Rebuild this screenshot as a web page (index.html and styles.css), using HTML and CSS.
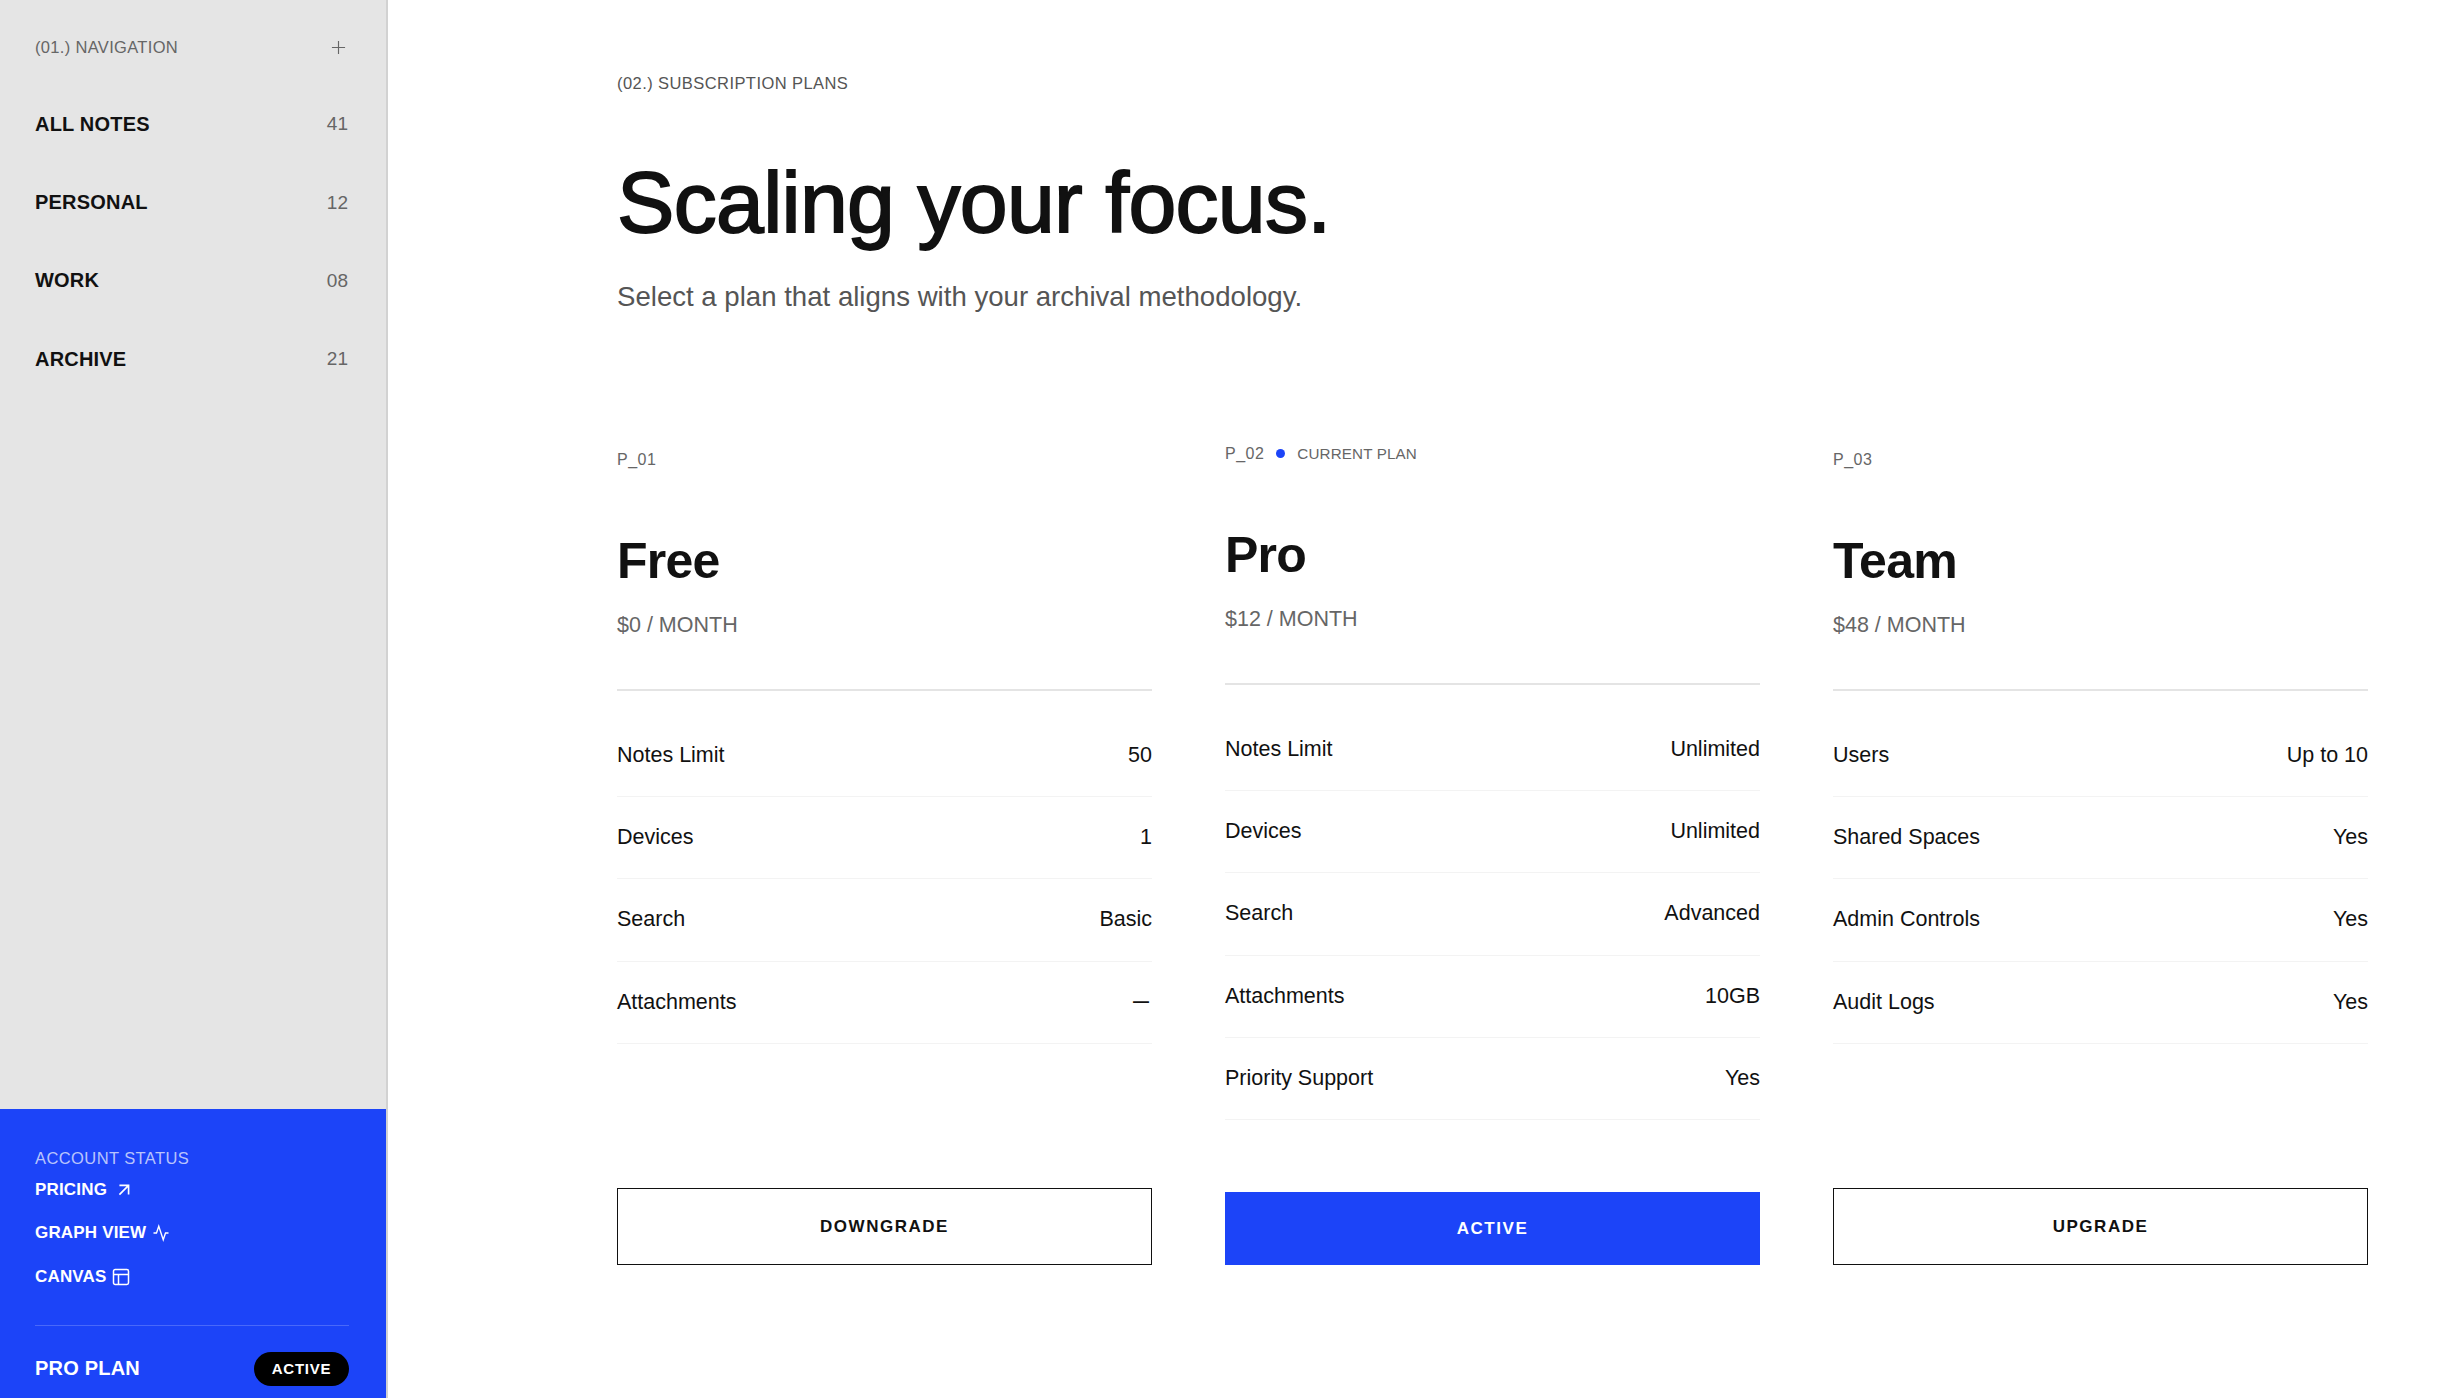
FILE: index.html
```html
<!DOCTYPE html>
<html lang="en">
<head>
    <meta charset="UTF-8">
    <meta name="viewport" content="width=device-width, initial-scale=1.0">
    <title>Subscription Plans</title>
    <link rel="stylesheet" href="styles.css">
</head>
<body>
    <aside class="sidebar">
        <div class="nav-head">
            <span>(01.) NAVIGATION</span>
            <svg class="plus-icon" viewBox="0 0 16 16"><path d="M8 1v14M1 8h14"/></svg>
        </div>
        <nav class="nav-list">
            <a class="nav-row" href="#"><strong>ALL NOTES</strong><span>41</span></a>
            <a class="nav-row" href="#"><strong>PERSONAL</strong><span>12</span></a>
            <a class="nav-row" href="#"><strong>WORK</strong><span>08</span></a>
            <a class="nav-row" href="#"><strong>ARCHIVE</strong><span>21</span></a>
        </nav>
        <div class="account">
            <div class="account-label">ACCOUNT STATUS</div>
            <a class="account-link" href="#">PRICING
                <svg class="link-icon arrow" viewBox="0 0 24 24"><path d="M7 17 17 7M7 7h10v10"/></svg>
            </a>
            <a class="account-link" href="#">GRAPH VIEW
                <svg class="link-icon pulse" viewBox="0 0 24 24"><path d="M22 12h-4l-3 9L9 3l-3 9H2"/></svg>
            </a>
            <a class="account-link" href="#">CANVAS
                <svg class="link-icon layout" viewBox="0 0 24 24"><rect x="3" y="3" width="18" height="18" rx="2"/><path d="M3 9h18M9 21V9"/></svg>
            </a>
            <div class="account-plan">
                <span>PRO PLAN</span>
                <span class="badge">ACTIVE</span>
            </div>
        </div>
    </aside>

    <main class="main">
        <div class="eyebrow">(02.) SUBSCRIPTION PLANS</div>
        <h1>Scaling your focus.</h1>
        <p class="lead">Select a plan that aligns with your archival methodology.</p>

        <div class="plans">
            <section class="plan">
                <div class="plan-id">P_01</div>
                <h2>Free</h2>
                <div class="price">$0 / MONTH</div>
                <ul class="features">
                    <li><span>Notes Limit</span><span>50</span></li>
                    <li><span>Devices</span><span>1</span></li>
                    <li><span>Search</span><span>Basic</span></li>
                    <li><span>Attachments</span><span class="none-value">—</span></li>
                </ul>
                <a class="btn" href="#">DOWNGRADE</a>
            </section>

            <section class="plan plan-current">
                <div class="plan-id">P_02 <i class="dot"></i> <span class="current-tag">CURRENT PLAN</span></div>
                <h2>Pro</h2>
                <div class="price">$12 / MONTH</div>
                <ul class="features">
                    <li><span>Notes Limit</span><span>Unlimited</span></li>
                    <li><span>Devices</span><span>Unlimited</span></li>
                    <li><span>Search</span><span>Advanced</span></li>
                    <li><span>Attachments</span><span>10GB</span></li>
                    <li><span>Priority Support</span><span>Yes</span></li>
                </ul>
                <a class="btn btn-active" href="#">ACTIVE</a>
            </section>

            <section class="plan">
                <div class="plan-id">P_03</div>
                <h2>Team</h2>
                <div class="price">$48 / MONTH</div>
                <ul class="features">
                    <li><span>Users</span><span>Up to 10</span></li>
                    <li><span>Shared Spaces</span><span>Yes</span></li>
                    <li><span>Admin Controls</span><span>Yes</span></li>
                    <li><span>Audit Logs</span><span>Yes</span></li>
                </ul>
                <a class="btn" href="#">UPGRADE</a>
            </section>
        </div>
    </main>
</body>
</html>
```

FILE: styles.css
```css
* {
    box-sizing: border-box;
}
body {
    font-family: "Liberation Sans", Arial, sans-serif;
    margin: 0;
    height: 100vh;
    overflow: hidden;
    display: flex;
    background-color: #fff;
    color: #111;
}
a {
    color: inherit;
    text-decoration: none;
}

/* sidebar */
.sidebar {
    width: 388px;
    flex-shrink: 0;
    display: flex;
    flex-direction: column;
    background: #e5e5e5;
    border-right: 2px solid #d2d2d2;
}
.nav-head {
    height: 85px;
    padding: 9px 40px 0 35px;
    display: flex;
    align-items: center;
    justify-content: space-between;
    font-size: 16.5px;
    letter-spacing: 0.02em;
    color: #666;
}
.plus-icon {
    width: 15px;
    height: 15px;
    fill: none;
    stroke: #666;
    stroke-width: 1.2;
}
.nav-row {
    height: 78.4px;
    padding: 0 38px 0 35px;
    display: flex;
    align-items: center;
    justify-content: space-between;
    font-size: 20px;
}
.nav-row strong {
    letter-spacing: 0.01em;
}
.nav-row span {
    font-size: 19px;
    color: #666;
}
.account {
    margin-top: auto;
    height: 289px;
    padding: 39px 37px 0 35px;
    background: #1c44f8;
    color: #fff;
}
.account-label {
    font-size: 16.5px;
    letter-spacing: 0.025em;
    line-height: 20px;
    color: rgba(255, 255, 255, 0.7);
}
.account-link {
    display: flex;
    align-items: center;
    gap: 6px;
    height: 43.5px;
    font-size: 17px;
    font-weight: bold;
    letter-spacing: 0.01em;
}
.link-icon {
    fill: none;
    stroke: #fff;
    stroke-width: 1.8;
}
.arrow {
    width: 22px;
    height: 22px;
    margin: -4px 0;
}
.pulse {
    width: 18px;
    height: 18px;
}
.layout {
    width: 20px;
    height: 20px;
    margin-left: -2px;
}
.account-plan {
    margin-top: 26px;
    border-top: 1px solid rgba(255, 255, 255, 0.2);
    padding-top: 26px;
    display: flex;
    align-items: center;
    justify-content: space-between;
    font-size: 20px;
    font-weight: bold;
    letter-spacing: 0.01em;
}
.badge {
    width: 95px;
    height: 34px;
    border-radius: 17px;
    background: #000;
    display: flex;
    align-items: center;
    justify-content: center;
    font-size: 15px;
    letter-spacing: 0.05em;
}

/* main column */
.main {
    flex: 1;
    padding: 72px 88px 0 229px;
}
.eyebrow {
    font-size: 16.5px;
    line-height: 22px;
    letter-spacing: 0.026em;
    color: #555;
}
h1 {
    margin: 57.5px 0 0;
    font-size: 86px;
    line-height: 100px;
    font-weight: normal;
    letter-spacing: -0.008em;
    -webkit-text-stroke: 1.8px #111;
}
.lead {
    margin: 27.5px 0 0;
    font-size: 27.6px;
    line-height: 36px;
    color: #555;
}
.plans {
    margin-top: 132.5px;
    display: grid;
    grid-template-columns: repeat(3, 1fr);
    column-gap: 73px;
}
.plan {
    display: flex;
    flex-direction: column;
    height: 817.5px;
}
.plan-current {
    margin-top: -6px;
    height: 823.5px;
}
.plan-id {
    display: flex;
    align-items: center;
    gap: 12px;
    height: 24px;
    font-size: 16px;
    letter-spacing: 0.03em;
    color: #666;
}
.dot {
    width: 9px;
    height: 9px;
    border-radius: 50%;
    background: #1c44f8;
}
.current-tag {
    font-size: 15.2px;
    letter-spacing: 0.01em;
}
h2 {
    margin: 61.5px 0 0;
    font-size: 50px;
    line-height: 56px;
    letter-spacing: -0.015em;
}
.price {
    margin-top: 20.5px;
    font-size: 21.5px;
    line-height: 30px;
    color: #666;
}
.features {
    list-style: none;
    margin: 49px 0 0;
    padding: 24px 0 0;
    border-top: 2px solid #e4e4e4;
}
.features li {
    height: 82.4px;
    display: flex;
    align-items: center;
    justify-content: space-between;
    border-bottom: 1.5px solid #f3f3f3;
    font-size: 21.5px;
}
.none-value {
    font-size: 16px;
    font-weight: bold;
    margin-right: 3px;
}
.btn {
    margin-top: auto;
    height: 77px;
    display: flex;
    align-items: center;
    justify-content: center;
    border: 1.5px solid #111;
    font-size: 17px;
    font-weight: bold;
    letter-spacing: 0.09em;
}
.btn-active {
    height: 73px;
    border: none;
    background: #1c44f8;
    color: #fff;
}
```
